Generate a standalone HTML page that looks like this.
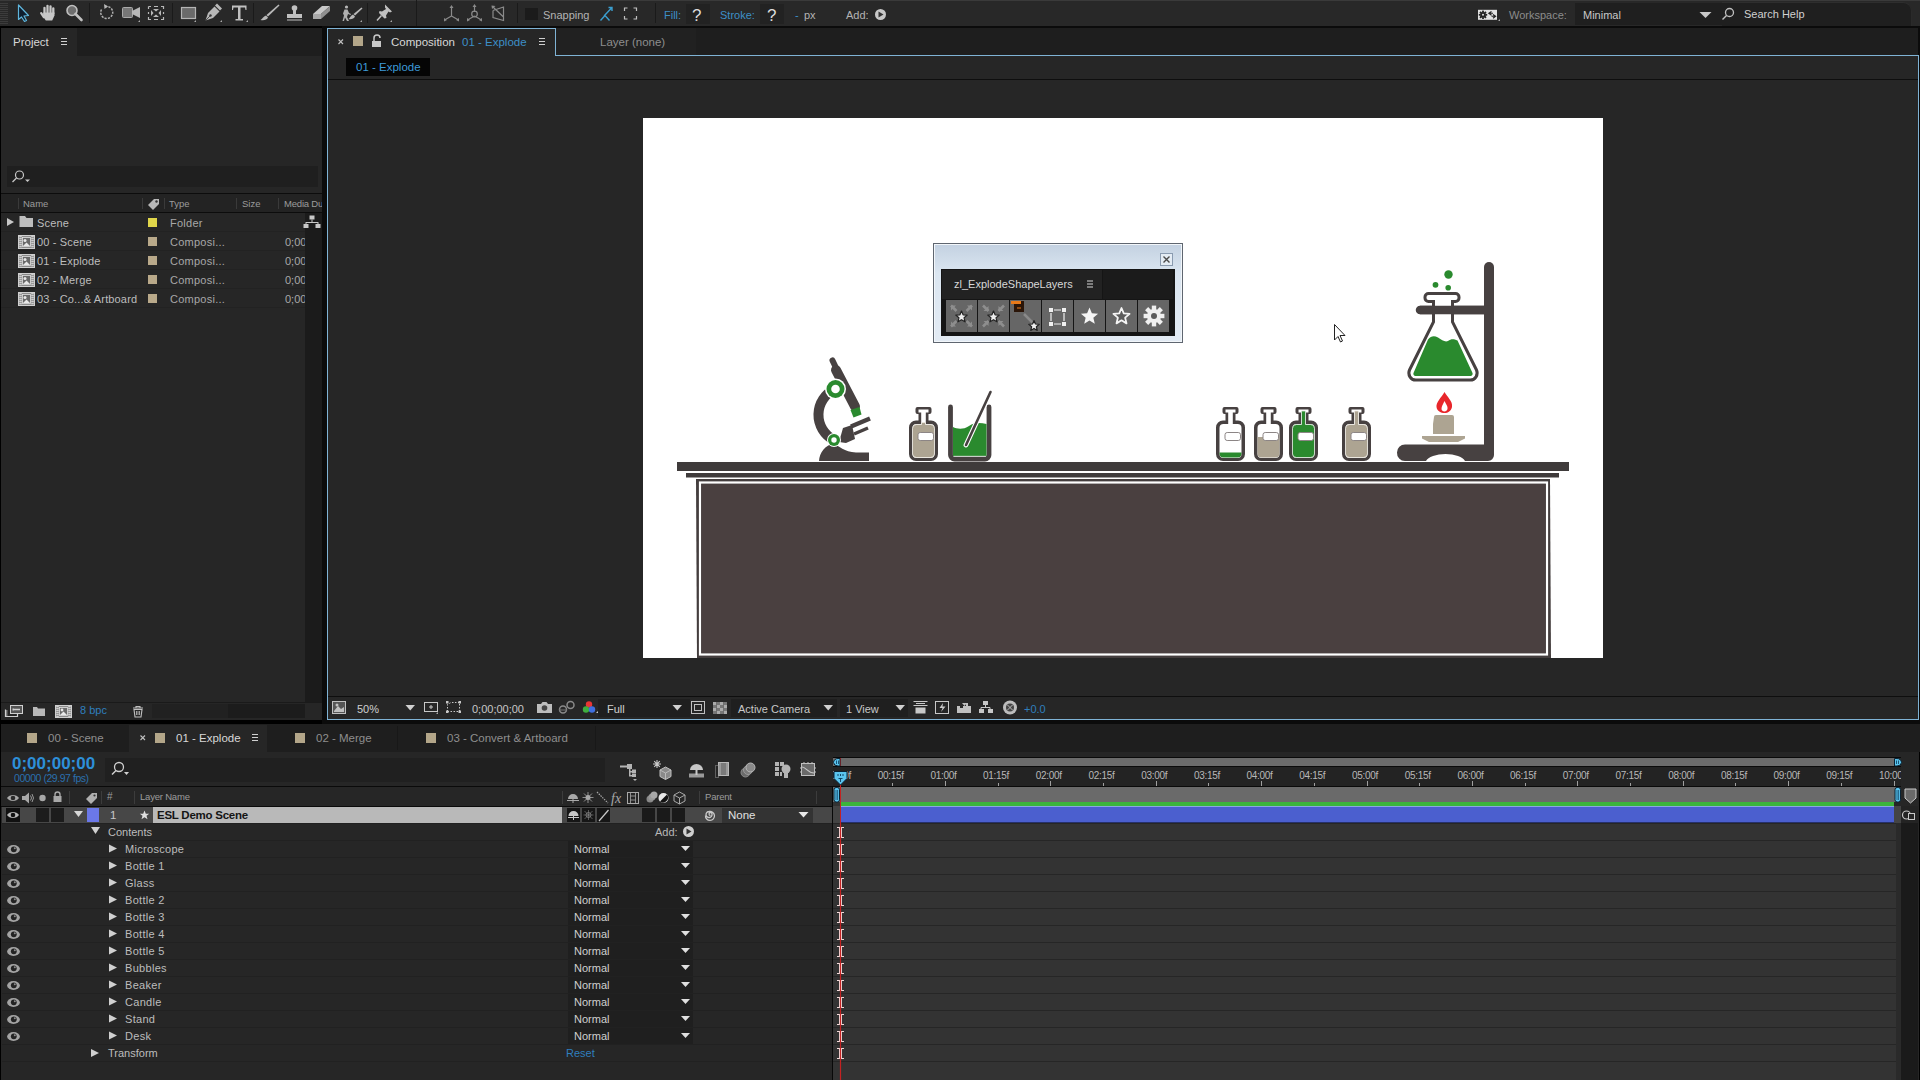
<!DOCTYPE html>
<html><head><meta charset="utf-8">
<style>
*{margin:0;padding:0;box-sizing:border-box}
html,body{width:1920px;height:1080px;overflow:hidden;background:#000;font-family:"Liberation Sans",sans-serif;font-size:11px;color:#b4b4b4}
.a{position:absolute}
.t{position:absolute;white-space:nowrap;line-height:1}
svg{position:absolute;overflow:visible}
</style></head><body>
<!-- TOOLBAR -->
<div class="a" style="left:0;top:0;width:1920px;height:26px;background:#282828;border-top:1px solid #3a3a3a"></div>
<div class="a" style="left:1575px;top:3px;width:147px;height:22px;background:#1f1f1f"></div><div class="a" style="left:1722px;top:2px;width:190px;height:24px;background:#1f1f1f;border-top-right-radius:9px;border-top:1px solid #2e2e2e;border-right:1px solid #2a2a2a"></div>
<div class="a" style="left:686px;top:4px;width:24px;height:20px;background:#222"></div>
<div class="a" style="left:760px;top:4px;width:24px;height:20px;background:#222"></div>
<svg class="a" style="left:0;top:0" width="1920" height="26" viewBox="0 0 1920 26">
<g stroke="#3c3c3c" stroke-width="1">
<path d="M0 3.5H8M0 5.5H8M0 7.5H8M0 9.5H8M0 11.5H8M0 13.5H8M0 15.5H8M0 17.5H8M0 19.5H8M0 21.5H8M0 23.5H8"/>
</g>
<!-- selection arrow -->
<path d="M18.5 5L18.5 19.5L21.5 17L24.5 21.5L26.5 20.5L24 16L28.5 15.5Z" fill="#0f1e2e" stroke="#5fb6dd" stroke-width="1.2" stroke-linejoin="round"/>
<!-- hand -->
<g stroke="#c8c8c8" stroke-width="2.3" stroke-linecap="round" fill="none">
<path d="M44.5 13.5V7.8M47.5 12.5V5.8M50.5 12.5V6.3M53.3 13.5V8.3M43.8 17L41.2 13.2"/>
</g>
<path d="M43.3 12.5H54.5V15.5L52.2 20.5H45.8L43 16.5Z" fill="#c8c8c8"/>
<!-- zoom -->
<circle cx="72" cy="10.5" r="5" fill="#6e6e6e" stroke="#c0c0c0" stroke-width="1.6"/>
<path d="M75.5 14L81.5 20" stroke="#c0c0c0" stroke-width="2.6" stroke-linecap="round"/>
<path d="M89.5 3V23M172.5 3V23M253.5 3V23M367.5 3V23M416.5 0V26M517.5 3V23M655.5 3V23" stroke="#1a1a1a" stroke-width="1"/>
<!-- rotate -->
<path d="M101.5 9.5A6 6 0 1 0 106 6.5" fill="none" stroke="#b0b0b0" stroke-width="1.5" stroke-dasharray="2.2 1.2"/>
<path d="M104 4L108 6.5L104.5 9Z" fill="#b8b8b8"/>
<!-- camera -->
<rect x="122.5" y="7.5" width="10" height="10" rx="1" fill="#777" stroke="#aaa"/>
<path d="M132 11L140 7V18L132 14Z" fill="#b8b8b8"/>
<path d="M138 22L140 20V22Z" fill="#aaa"/>
<!-- pan behind -->
<path d="M148.5 6.5H151M154 6.5H158M161 6.5H163.5V9M163.5 12V14M163.5 17V19.5H161M158 19.5H154M151 19.5H148.5V17M148.5 14V12M148.5 9V6.5" fill="none" stroke="#b8b8b8" stroke-width="1.2"/>
<path d="M153 9H159L156 11.5Z M153 17H159L156 14.5Z M151 10V16L153.5 13Z M161 10V16L158.5 13Z" fill="#b8b8b8"/>
<!-- rectangle -->
<rect x="181.5" y="7.5" width="14" height="11" fill="#6a6a6a" stroke="#b4b4b4" stroke-width="1.2"/>
<path d="M194 22L196 20V22Z" fill="#aaa"/>
<!-- pen -->
<path d="M205.5 20.5L208 13L214.5 6.5L219.5 11.5L213 18Z" fill="#b8b8b8"/>
<path d="M215 5.5L217 3.5L222 8.5L220 10.5Z" fill="#b8b8b8"/>
<circle cx="210.5" cy="15.5" r="1.2" fill="#333"/>
<path d="M205.5 20.5L210 16" stroke="#333" stroke-width="0.8"/>
<path d="M220 22L222 20V22Z" fill="#aaa"/>
<!-- type -->
<path d="M232 5.5H246.5V10H245.5L245 7.5H240.5V19H243V20.5H235.5V19H238V7.5H233.5L233 10H232Z" fill="#c0c0c0"/>
<path d="M246 22L248 20V22Z" fill="#aaa"/>
<!-- brush -->
<path d="M278.5 4.5L279.5 5.5L268 16.5L266.5 15Z" fill="#b8b8b8"/>
<path d="M266 15.5L268 17.5C267 20 264 20.5 260.5 20C262.5 19 263 16.5 266 15.5Z" fill="#b8b8b8"/>
<!-- stamp -->
<circle cx="294.5" cy="8" r="2.8" fill="#c0c0c0"/>
<path d="M293 10H296V14H302V18H287V14H293Z" fill="#c0c0c0"/>
<path d="M287 20H302" stroke="#c0c0c0" stroke-width="1"/>
<!-- eraser -->
<path d="M313 14L322 6H330L321 14Z" fill="#c8c8c8"/>
<path d="M313 14H321V19H313Z" fill="#a8a8a8"/>
<path d="M321 14L330 6V11L321 19Z" fill="#909090"/>
<!-- roto brush -->
<circle cx="346.5" cy="7" r="1.6" fill="#b8b8b8"/>
<path d="M344.5 9.5L347.5 9.5L349 13L351 14L350.5 15L348 14L347 17L349 21H347L345 17.5L344 21H342.5L344 15.5L343 13.5Z" fill="#b0b0b0"/>
<path d="M361.5 7.5L362.5 8.5L355 15.5L353.5 14Z" fill="#b8b8b8"/>
<path d="M353 14.5L355 16.5C354 19 351 19.5 348.5 19C350 18 350.5 15.5 353 14.5Z" fill="#b8b8b8"/>
<path d="M360 22L362 20V22Z" fill="#aaa"/>
<!-- pin -->
<path d="M385 4.5L392 11.5L390 12.5L388.5 11.5L386 15.5L386.5 18L384.5 18.5L379 13L379.5 11L382 11.5L386 9L385 7.5Z" fill="#c0c0c0"/>
<path d="M381.5 15.5L377 20.5" stroke="#c0c0c0" stroke-width="1.5"/>
<path d="M390 22L392 20V22Z" fill="#aaa"/>
<!-- axis icons -->
<g fill="none" stroke="#8a8a8a" stroke-width="1.2">
<path d="M451.5 16V7M451.5 16L444.5 20M451.5 16L458.5 20"/>
<path d="M474.5 12V6M474.5 16L467.5 20M474.5 16L481.5 20"/>
<circle cx="474.5" cy="14" r="2.8"/>
<path d="M492.5 6.5L503.5 17M493 10.5V17.5L503.5 20.5V7L493 10.5"/>
</g>
<g fill="#8a8a8a">
<path d="M449.5 8H453.5L451.5 5Z M444 18L444 21.5L447 20Z M459 18L459 21.5L456 20Z"/>
<path d="M472.5 7H476.5L474.5 4Z M467 18L467 21.5L470 20Z M482 18L482 21.5L479 20Z"/>
<path d="M491.5 5.5L495.5 6L492 9Z"/>
</g>
<!-- snapping -->
<rect x="525" y="8" width="13" height="12" fill="#1b1b1b"/>
<path d="M600.5 20.5L605 15.5L609.5 20.5M604 16L612 7.5M608.5 7.5H612V11" fill="none" stroke="#3b9fd0" stroke-width="1.4"/>
<path d="M624.5 11V8H627.5M633.5 8H636.5V11M636.5 16V19H633.5M627.5 19H624.5V16" fill="none" stroke="#c0c0c0" stroke-width="1.2"/>
<circle cx="880.5" cy="14.5" r="5.5" fill="#c8c8c8"/>
<path d="M878.5 11.5L883.5 14.5L878.5 17.5Z" fill="#333"/>
<!-- workspace icon -->
<rect x="1478" y="9.8" width="19" height="10" fill="#e2e2e2"/>
<circle cx="1483" cy="14.8" r="2.9" fill="#222"/><rect x="1485.40" y="13.90" width="1.8" height="1.8" fill="#222" transform="rotate(0 1486.30 14.80)"/><rect x="1484.43" y="16.23" width="1.8" height="1.8" fill="#222" transform="rotate(45 1485.33 17.13)"/><rect x="1482.10" y="17.20" width="1.8" height="1.8" fill="#222" transform="rotate(90 1483.00 18.10)"/><rect x="1479.77" y="16.23" width="1.8" height="1.8" fill="#222" transform="rotate(135 1480.67 17.13)"/><rect x="1478.80" y="13.90" width="1.8" height="1.8" fill="#222" transform="rotate(180 1479.70 14.80)"/><rect x="1479.77" y="11.57" width="1.8" height="1.8" fill="#222" transform="rotate(225 1480.67 12.47)"/><rect x="1482.10" y="10.60" width="1.8" height="1.8" fill="#222" transform="rotate(270 1483.00 11.50)"/><rect x="1484.43" y="11.57" width="1.8" height="1.8" fill="#222" transform="rotate(315 1485.33 12.47)"/><circle cx="1483" cy="14.8" r="1" fill="#e2e2e2"/>
<path d="M1491.5 11.5L1488.8 13.3L1491.5 15.2M1489 13.3H1493M1493 14.5L1495.6 16.3L1493 18.2M1495.5 16.3H1491.5" fill="none" stroke="#222" stroke-width="1.1"/>
<path d="M1498 21L1500 19V21Z" fill="#aaa"/>
<path d="M1699.5 12H1711.5L1705.5 18Z" fill="#c8c8c8"/>
<circle cx="1729.5" cy="12.5" r="4" fill="none" stroke="#c0c0c0" stroke-width="1.3"/>
<path d="M1726.5 15.5L1722.5 19.5" stroke="#c0c0c0" stroke-width="1.4"/>
</svg>
<div class="t" style="left:543px;top:10px;color:#b4b4b4">Snapping</div>
<div class="t" style="left:664px;top:10px;color:#3d8fc7">Fill:</div>
<div class="t" style="left:692px;top:7px;color:#dcdcdc;font-size:17px">?</div>
<div class="t" style="left:720px;top:10px;color:#3d8fc7">Stroke:</div>
<div class="t" style="left:767px;top:7px;color:#dcdcdc;font-size:17px">?</div>
<div class="t" style="left:795px;top:10px;color:#3d8fc7">-</div>
<div class="t" style="left:804px;top:10px;color:#b4b4b4">px</div>
<div class="t" style="left:846px;top:10px;color:#b4b4b4">Add:</div>
<div class="t" style="left:1509px;top:10px;color:#8c8c8c">Workspace:</div>
<div class="t" style="left:1583px;top:10px;color:#c8c8c8">Minimal</div>
<div class="t" style="left:1744px;top:9px;color:#d0d0d0">Search Help</div>

<!-- PROJECT PANEL -->
<div class="a" style="left:1px;top:28px;width:321px;height:692px;background:#262626"></div>
<div class="a" style="left:77px;top:28px;width:245px;height:28px;background:#1e1e1e"></div>
<div class="t" style="left:13px;top:37px;color:#d6d6d6;font-size:11.5px">Project</div>
<svg class="a" style="left:0;top:28px" width="322" height="30"><path d="M61 10.5H67M61 13.5H67M61 16.5H67" stroke="#d0d0d0" stroke-width="1.2"/></svg>
<!-- search field -->
<div class="a" style="left:7px;top:166px;width:311px;height:21px;background:#1f1f1f"></div>
<svg class="a" style="left:0;top:159.5px" width="40" height="30"><circle cx="19.5" cy="15" r="4" fill="none" stroke="#c8c8c8" stroke-width="1.2"/><path d="M16.5 18L12.5 22" stroke="#c8c8c8" stroke-width="1.3"/><path d="M25 19.5H30L27.5 22Z" fill="#c8c8c8"/></svg>
<!-- header -->
<div class="a" style="left:1px;top:193px;width:321px;height:1px;background:#0c0c0c"></div>
<div class="a" style="left:1px;top:194px;width:321px;height:18px;background:#232323"></div>
<div class="a" style="left:1px;top:212px;width:321px;height:1px;background:#0c0c0c"></div>
<div class="a" style="left:18px;top:198px;width:1px;height:11px;background:#3a3a3a"></div>
<div class="a" style="left:142px;top:198px;width:1px;height:11px;background:#3a3a3a"></div>
<div class="a" style="left:164px;top:198px;width:1px;height:11px;background:#3a3a3a"></div>
<div class="a" style="left:236px;top:198px;width:1px;height:11px;background:#3a3a3a"></div>
<div class="a" style="left:278px;top:198px;width:1px;height:11px;background:#3a3a3a"></div>
<div class="t" style="left:23px;top:199px;color:#9c9c9c;font-size:9.5px">Name</div>
<div class="t" style="left:169px;top:199px;color:#9c9c9c;font-size:9.5px">Type</div>
<div class="t" style="left:242px;top:199px;color:#9c9c9c;font-size:9.5px">Size</div>
<div class="t" style="left:284px;top:199px;color:#9c9c9c;font-size:9.5px;width:38px;overflow:hidden;letter-spacing:-0.2px">Media Duration</div>
<svg class="a" style="left:146px;top:196px" width="16" height="16"><path d="M2 9L8 3H13V8L7 14Z" fill="#b8b8b8"/><circle cx="10.5" cy="5.5" r="1.2" fill="#333"/></svg>
<!-- rows -->
<div class="a" style="left:305px;top:213px;width:17px;height:489px;background:#1b1b1b"></div>
<div class="a" style="left:1px;top:231px;width:304px;height:1px;background:#222"></div>
<div class="a" style="left:1px;top:250px;width:304px;height:1px;background:#222"></div>
<div class="a" style="left:1px;top:269px;width:304px;height:1px;background:#222"></div>
<div class="a" style="left:1px;top:288px;width:304px;height:1px;background:#222"></div>
<div class="a" style="left:1px;top:307px;width:304px;height:1px;background:#222"></div>
<svg class="a" style="left:0;top:213px" width="322" height="100">
<path d="M7 5V13L14 9Z" fill="#c8c8c8"/>
<path d="M19.5 3H25L26.5 5H33V14H19.5Z" fill="#bdbdbd"/>
<rect x="18.5" y="22.5" width="16" height="13" fill="#8a8a8a" stroke="#d0d0d0" stroke-width="1"/>
<path d="M20.5 23V35M32.5 23V35" stroke="#d0d0d0" stroke-width="2.5" stroke-dasharray="1.2 0.8"/>
<rect x="22.5" y="24.5" width="8" height="9" fill="#6a6a6a" stroke="#e0e0e0" stroke-width="0.8"/>
<circle cx="25" cy="27.5" r="1.5" fill="#e8e8e8"/><path d="M23 33L26.5 29.5L30 33Z" fill="#e8e8e8"/><rect x="18.5" y="41.5" width="16" height="13" fill="#8a8a8a" stroke="#d0d0d0" stroke-width="1"/>
<path d="M20.5 42V54M32.5 42V54" stroke="#d0d0d0" stroke-width="2.5" stroke-dasharray="1.2 0.8"/>
<rect x="22.5" y="43.5" width="8" height="9" fill="#6a6a6a" stroke="#e0e0e0" stroke-width="0.8"/>
<circle cx="25" cy="46.5" r="1.5" fill="#e8e8e8"/><path d="M23 52L26.5 48.5L30 52Z" fill="#e8e8e8"/><rect x="18.5" y="60.5" width="16" height="13" fill="#8a8a8a" stroke="#d0d0d0" stroke-width="1"/>
<path d="M20.5 61V73M32.5 61V73" stroke="#d0d0d0" stroke-width="2.5" stroke-dasharray="1.2 0.8"/>
<rect x="22.5" y="62.5" width="8" height="9" fill="#6a6a6a" stroke="#e0e0e0" stroke-width="0.8"/>
<circle cx="25" cy="65.5" r="1.5" fill="#e8e8e8"/><path d="M23 71L26.5 67.5L30 71Z" fill="#e8e8e8"/><rect x="18.5" y="79.5" width="16" height="13" fill="#8a8a8a" stroke="#d0d0d0" stroke-width="1"/>
<path d="M20.5 80V92M32.5 80V92" stroke="#d0d0d0" stroke-width="2.5" stroke-dasharray="1.2 0.8"/>
<rect x="22.5" y="81.5" width="8" height="9" fill="#6a6a6a" stroke="#e0e0e0" stroke-width="0.8"/>
<circle cx="25" cy="84.5" r="1.5" fill="#e8e8e8"/><path d="M23 90L26.5 86.5L30 90Z" fill="#e8e8e8"/>
<rect x="309.5" y="2.5" width="5" height="4" fill="#c8c8c8"/><path d="M312 6.5V9M306 9.5H318M306 9V11M318 9V11" stroke="#c8c8c8" fill="none"/><rect x="303.5" y="11" width="5" height="4" fill="#c8c8c8"/><rect x="315.5" y="11" width="5" height="4" fill="#c8c8c8"/>
<rect x="148" y="5" width="9" height="9" fill="#e0d64a"/>
<rect x="148" y="24" width="9" height="9" fill="#b9a98a"/>
<rect x="148" y="43" width="9" height="9" fill="#b9a98a"/>
<rect x="148" y="62" width="9" height="9" fill="#b9a98a"/>
<rect x="148" y="81" width="9" height="9" fill="#b9a98a"/>
</svg>
<div class="t" style="left:37px;top:218px;color:#bdbdbd;letter-spacing:0.15px">Scene</div>
<div class="t" style="left:37px;top:237px;color:#bdbdbd;letter-spacing:0.15px">00 - Scene</div>
<div class="t" style="left:37px;top:256px;color:#bdbdbd;letter-spacing:0.15px">01 - Explode</div>
<div class="t" style="left:37px;top:275px;color:#bdbdbd;letter-spacing:0.15px">02 - Merge</div>
<div class="t" style="left:37px;top:294px;color:#bdbdbd;letter-spacing:0.15px">03 - Co...&amp; Artboard</div>
<div class="t" style="left:170px;top:218px;color:#a8a8a8;letter-spacing:0.25px">Folder</div>
<div class="t" style="left:170px;top:237px;color:#a8a8a8;letter-spacing:0.25px">Composi...</div>
<div class="t" style="left:170px;top:256px;color:#a8a8a8;letter-spacing:0.25px">Composi...</div>
<div class="t" style="left:170px;top:275px;color:#a8a8a8;letter-spacing:0.25px">Composi...</div>
<div class="t" style="left:170px;top:294px;color:#a8a8a8;letter-spacing:0.25px">Composi...</div>
<div class="t" style="left:285px;top:237px;color:#a8a8a8;width:20px;overflow:hidden">0;00;10;00</div>
<div class="t" style="left:285px;top:256px;color:#a8a8a8;width:20px;overflow:hidden">0;00;10;00</div>
<div class="t" style="left:285px;top:275px;color:#a8a8a8;width:20px;overflow:hidden">0;00;10;00</div>
<div class="t" style="left:285px;top:294px;color:#a8a8a8;width:20px;overflow:hidden">0;00;10;00</div>
<!-- bottom bar -->
<div class="a" style="left:1px;top:702px;width:321px;height:1px;background:#1a1a1a"></div>
<div class="a" style="left:152px;top:704px;width:76px;height:14px;background:#212121"></div>
<div class="a" style="left:228px;top:704px;width:77px;height:14px;background:#1c1c1c"></div>
<svg class="a" style="left:0;top:702px" width="150" height="18">
<rect x="10.5" y="3.5" width="12" height="8" fill="#555" stroke="#d0d0d0"/><path d="M14 7.5H20" stroke="#d0d0d0" stroke-width="1.5"/><rect x="12.5" y="6.5" width="1.5" height="2" fill="#d0d0d0"/>
<path d="M5.5 7.5V14.5H17.5V11.5" fill="none" stroke="#d0d0d0" stroke-width="1.2"/><path d="M5.5 9H7.5M5.5 11H7.5M5.5 13H7.5" stroke="#d0d0d0"/>
<path d="M33 5H37L38 6.5H45V14H33Z" fill="#b8b8b8"/>
<rect x="55.5" y="3.5" width="16" height="12" fill="#8a8a8a" stroke="#d0d0d0"/><path d="M57.5 4V15M69.5 4V15" stroke="#d0d0d0" stroke-width="2.5" stroke-dasharray="1.2 0.8"/><rect x="59.5" y="5.5" width="8" height="8" fill="#6a6a6a" stroke="#e0e0e0" stroke-width="0.8"/><circle cx="62" cy="8" r="1.4" fill="#e8e8e8"/><path d="M60 13L63.5 9.5L67 13Z" fill="#e8e8e8"/>
<path d="M133 6H143M136 6V4.5H140V6M134 7.5H142L141 15H135Z" fill="none" stroke="#c0c0c0" stroke-width="1.1"/>
<path d="M136.5 9V13M138 9V13M139.5 9V13" stroke="#c0c0c0" stroke-width="0.8"/>
</svg>
<div class="t" style="left:80px;top:705px;color:#2f7fbe">8 bpc</div>
<!-- COMP PANEL -->
<div class="a" style="left:322px;top:26px;width:1598px;height:698px;background:#0b0b0b"></div>
<div class="a" style="left:328px;top:28px;width:1590px;height:27px;background:#1e1e1e"></div>
<div class="a" style="left:328px;top:29px;width:227px;height:27px;background:#262626"></div>
<div class="a" style="left:556px;top:28px;width:140px;height:27px;background:#212121"></div>
<div class="a" style="left:328px;top:56px;width:1590px;height:23px;background:#262626"></div>
<div class="a" style="left:328px;top:79px;width:1590px;height:1px;background:#0e0e0e"></div>
<div class="a" style="left:328px;top:80px;width:1590px;height:616px;background:#262626"></div>
<div class="a" style="left:328px;top:696px;width:1590px;height:1px;background:#0e0e0e"></div>
<div class="a" style="left:328px;top:697px;width:1590px;height:22px;background:#262626"></div>
<!-- blue border -->
<div class="a" style="left:327px;top:28px;width:229px;height:1px;background:#7fb3d5"></div>
<div class="a" style="left:555px;top:28px;width:1px;height:28px;background:#7fb3d5"></div>
<div class="a" style="left:555px;top:55px;width:1364px;height:1px;background:#7fb3d5"></div>
<div class="a" style="left:1918px;top:55px;width:1px;height:665px;background:#7fb3d5"></div>
<div class="a" style="left:327px;top:28px;width:1px;height:692px;background:#7fb3d5"></div>
<div class="a" style="left:327px;top:719px;width:1592px;height:1px;background:#7fb3d5"></div>
<!-- tab content -->
<svg class="a" style="left:328px;top:29px" width="230" height="27">
<path d="M10.5 10.5L15 15M15 10.5L10.5 15" stroke="#c0c0c0" stroke-width="1.1"/>
<rect x="25" y="7" width="10" height="10" fill="#b3a689"/>
<path d="M46 12V9A3 3 0 0 1 52 9" fill="none" stroke="#c8c8c8" stroke-width="1.5"/>
<rect x="44" y="12" width="9" height="6" fill="#c8c8c8"/>
<path d="M211 9.5H217M211 12.5H217M211 15.5H217" stroke="#d0d0d0" stroke-width="1.2"/>
</svg>
<div class="t" style="left:391px;top:37px;color:#d8d8d8;font-size:11.5px">Composition</div>
<div class="t" style="left:462px;top:37px;color:#3d8fc7;font-size:11.5px">01 - Explode</div>
<div class="t" style="left:600px;top:37px;color:#8e8e8e;font-size:11.5px">Layer (none)</div>
<div class="a" style="left:346px;top:58px;width:84px;height:18px;background:#050505"></div>
<div class="t" style="left:356px;top:62px;color:#3d9ad8;font-size:11.5px">01 - Explode</div>
<!-- bottom toolbar -->
<div class="a" style="left:598px;top:699px;width:92px;height:18px;background:#1f1f1f"></div>
<div class="a" style="left:731px;top:699px;width:106px;height:18px;background:#1f1f1f"></div>
<div class="a" style="left:840px;top:699px;width:68px;height:18px;background:#1f1f1f"></div>
<svg class="a" style="left:0;top:697px" width="1100" height="22">
<rect x="332.5" y="4.5" width="13" height="12" fill="#555" stroke="#c0c0c0"/>
<path d="M334 14L338 9L341 12L344 10V15H334Z" fill="#c0c0c0"/><circle cx="337" cy="8" r="1.5" fill="#c0c0c0"/>
<path d="M405.5 8H415L410.25 13.5Z" fill="#d0d0d0"/>
<rect x="424.5" y="5.5" width="13" height="9" fill="none" stroke="#c8c8c8"/><path d="M431 8V12M429 10H433" stroke="#c8c8c8"/><path d="M436 17L438 15V17Z" fill="#aaa"/>
<path d="M447.5 14.5V7.5L451 5.5H459.5V14.5H447.5" fill="none" stroke="#c8c8c8" stroke-dasharray="1.5 1.5"/>
<rect x="446" y="4" width="2.5" height="2.5" fill="#c8c8c8"/><rect x="458.5" y="4" width="2.5" height="2.5" fill="#c8c8c8"/><rect x="446" y="13.5" width="2.5" height="2.5" fill="#c8c8c8"/><rect x="458.5" y="13.5" width="2.5" height="2.5" fill="#c8c8c8"/>
<path d="M537 7H541L542.5 5H546.5L548 7H552V16H537Z" fill="#bdbdbd"/><circle cx="544.5" cy="11" r="2.8" fill="#444"/>
<circle cx="563" cy="12.5" r="3.5" fill="none" stroke="#8a8a8a" stroke-width="1.5"/><circle cx="570.5" cy="8" r="3.5" fill="none" stroke="#8a8a8a" stroke-width="1.5"/><path d="M559 13H567" stroke="#777"/>
<circle cx="589" cy="7.5" r="3.2" fill="#e83535"/><circle cx="586" cy="12.5" r="3.2" fill="#3fae3f"/><circle cx="592" cy="12.5" r="3.2" fill="#3f6fe0"/><path d="M596 16L598 14V16Z" fill="#ccc"/>
<path d="M672.5 8H682L677.25 13.5Z" fill="#d0d0d0"/>
<rect x="691.5" y="4.5" width="13" height="12" fill="none" stroke="#c0c0c0"/><rect x="694.5" y="7.5" width="7" height="6" fill="none" stroke="#c0c0c0"/>
<g fill="#aaa"><rect x="713" y="5" width="3.5" height="3"/><rect x="720" y="5" width="3.5" height="3"/><rect x="716.5" y="8" width="3.5" height="3"/><rect x="723.5" y="8" width="3.5" height="3"/><rect x="713" y="11" width="3.5" height="3"/><rect x="720" y="11" width="3.5" height="3"/><rect x="716.5" y="14" width="3.5" height="3"/><rect x="723.5" y="14" width="3.5" height="3"/></g>
<g fill="#777"><rect x="716.5" y="5" width="3.5" height="3"/><rect x="723.5" y="5" width="3.5" height="3"/><rect x="713" y="8" width="3.5" height="3"/><rect x="720" y="8" width="3.5" height="3"/><rect x="716.5" y="11" width="3.5" height="3"/><rect x="723.5" y="11" width="3.5" height="3"/><rect x="713" y="14" width="3.5" height="3"/><rect x="720" y="14" width="3.5" height="3"/></g>
<path d="M823.5 8H833L828.25 13.5Z" fill="#d0d0d0"/>
<path d="M895.5 8H905L900.25 13.5Z" fill="#d0d0d0"/>
<path d="M913.5 4.5H927.5M913.5 8.5H927.5M916 6.5H925" stroke="#c8c8c8"/><rect x="915.5" y="10.5" width="10" height="6" fill="#c8c8c8"/>
<rect x="935.5" y="4.5" width="13" height="12" fill="none" stroke="#c8c8c8"/><path d="M943 6L939.5 11H942.5L941 15L945.5 9.5H942.5Z" fill="#c8c8c8"/>
<path d="M957 16H971V9H968V6H966V9H963V11H960V9H957Z" fill="#c0c0c0"/><path d="M962 6H967L964.5 9Z" fill="#c0c0c0"/>
<rect x="983" y="4" width="5" height="4" fill="#c8c8c8"/><path d="M985.5 8V10.5M981 10.5H990M981 10.5V12M990 10.5V12" stroke="#c8c8c8" fill="none"/><rect x="979" y="12" width="5" height="4" fill="#c8c8c8"/><rect x="988" y="12" width="5" height="4" fill="#c8c8c8"/>
<circle cx="1010" cy="10.5" r="7" fill="#bdbdbd"/><circle cx="1010" cy="10.5" r="4" fill="#444"/><path d="M1007 7.5L1013 13.5M1013 7.5L1007 13.5" stroke="#bbb" stroke-width="1"/>
</svg>
<div class="t" style="left:357px;top:704px;color:#d0d0d0">50%</div>
<div class="t" style="left:472px;top:704px;color:#c8c8c8">0;00;00;00</div>
<div class="t" style="left:607px;top:704px;color:#d0d0d0">Full</div>
<div class="t" style="left:738px;top:704px;color:#c8c8c8">Active Camera</div>
<div class="t" style="left:846px;top:704px;color:#c8c8c8">1 View</div>
<div class="t" style="left:1024px;top:704px;color:#2f7fbe">+0.0</div>
<!-- COMP ARTWORK -->
<!--ART-START--><div class="a" style="left:643px;top:118px;width:960px;height:540px;background:#fff"></div>
<svg class="a" style="left:643px;top:118px" width="960" height="540" viewBox="643 118 960 540">
<rect x="677" y="462" width="892" height="9" fill="#3f3b3b"/>
<rect x="686" y="473" width="873" height="4.5" fill="#3f3b3b"/>
<path d="M696 479H1550L1551 658H697Z" fill="#443e3e"/>
<rect x="700" y="482.5" width="847" height="172" fill="none" stroke="#fff" stroke-width="2.2"/>
<rect x="701.5" y="484" width="844" height="169" fill="#4a4040"/>
<path d="M832.5 360.5L838 372" stroke="#474141" stroke-width="6" stroke-linecap="round"/>
<path d="M836 370L855 406.5" stroke="#474141" stroke-width="10" stroke-linecap="round"/>
<path d="M850.5 410L859.5 407L861.5 414.5L853.5 417.5Z" fill="#2a8a2e"/>
<path d="M835 389A28.3 28.3 0 0 0 834 440" fill="none" stroke="#474141" stroke-width="10"/>
<path d="M851 426.5L870 418.5" stroke="#474141" stroke-width="4.5"/>
<path d="M854 434L868 428" stroke="#474141" stroke-width="3.5"/>
<path d="M843 428L852 425L855 439L846 443L839 442Z" fill="#474141"/>
<path d="M819 461C819.5 453 825 445 834 443.5C839 446 844 452 856 452.5H869V461Z" fill="#474141"/>
<circle cx="835.5" cy="389" r="10.5" fill="#fff"/>
<circle cx="835.5" cy="389" r="9" fill="#2a8a2e"/>
<circle cx="835.5" cy="389" r="4.3" fill="#fff"/>
<circle cx="834" cy="440" r="7" fill="#fff"/>
<circle cx="834" cy="440" r="6" fill="#2a8a2e"/>
<circle cx="834" cy="440" r="2.7" fill="#fff"/>
<path d="M917.5 407A2 2 0 0 0 915.5 409V412A2 2 0 0 0 917.5 414H918.5V420.5H916.0A7 7 0 0 0 909.0 427.5V454A7 7 0 0 0 916.0 461H931.0A7 7 0 0 0 938.0 454V427.5A7 7 0 0 0 931.0 420.5H928.5V414H929.5A2 2 0 0 0 931.5 412V409A2 2 0 0 0 929.5 407Z" fill="#474141"/><path d="M918.5 409.5H928.5V412.5H925.8V424H930.5A4 4 0 0 1 934.5 428V454A4 4 0 0 1 930.5 458H916.5A4 4 0 0 1 912.5 454V428A4 4 0 0 1 916.5 424H921.2V412.5H918.5Z" fill="#fff"/><path d="M921.5 422.5V424.5H916.5A4 4 0 0 0 912.5 428.5V454A4 4 0 0 0 916.5 457.5H930.5A4 4 0 0 0 934.5 454V428.5A4 4 0 0 0 930.5 424.5H925.5V422.5Z" fill="#ada492" stroke="#efece6" stroke-width="0.8"/><rect x="918.0" y="432.5" width="15.5" height="8" rx="2.2" fill="#fff" stroke="#8c8585" stroke-width="1"/>
<path d="M950.5 407V455A4 4 0 0 0 954.5 459H985A4 4 0 0 0 989 455V407" fill="none" stroke="#474141" stroke-width="4.8" stroke-linecap="round"/>
<path d="M953 427C957 429 963 430 969 426C975 422 981 423 986.5 424V456H953Z" fill="#2a8a2e"/>
<path d="M953.5 456.3H986" stroke="#dfeadf" stroke-width="0.8"/>
<path d="M990.5 392L966 445" stroke="#fff" stroke-width="4.8" stroke-linecap="round"/>
<path d="M990.5 392L966 445" stroke="#474141" stroke-width="2.6" stroke-linecap="round"/>
<path d="M1224.5 407A2 2 0 0 0 1222.5 409V412A2 2 0 0 0 1224.5 414H1225.5V420.5H1223.0A7 7 0 0 0 1216.0 427.5V454A7 7 0 0 0 1223.0 461H1238.0A7 7 0 0 0 1245.0 454V427.5A7 7 0 0 0 1238.0 420.5H1235.5V414H1236.5A2 2 0 0 0 1238.5 412V409A2 2 0 0 0 1236.5 407Z" fill="#474141"/><path d="M1225.5 409.5H1235.5V412.5H1232.8V424H1237.5A4 4 0 0 1 1241.5 428V454A4 4 0 0 1 1237.5 458H1223.5A4 4 0 0 1 1219.5 454V428A4 4 0 0 1 1223.5 424H1228.2V412.5H1225.5Z" fill="#fff"/><path d="M1219.5 452.5H1241.5V454A4 4 0 0 1 1237.5 457.5H1223.5A4 4 0 0 1 1219.5 454Z" fill="#2a8a2e"/><rect x="1225.0" y="432.5" width="15.5" height="8" rx="2.2" fill="#fff" stroke="#8c8585" stroke-width="1"/>
<path d="M1262.5 407A2 2 0 0 0 1260.5 409V412A2 2 0 0 0 1262.5 414H1263.5V420.5H1261.0A7 7 0 0 0 1254.0 427.5V454A7 7 0 0 0 1261.0 461H1276.0A7 7 0 0 0 1283.0 454V427.5A7 7 0 0 0 1276.0 420.5H1273.5V414H1274.5A2 2 0 0 0 1276.5 412V409A2 2 0 0 0 1274.5 407Z" fill="#474141"/><path d="M1263.5 409.5H1273.5V412.5H1270.8V424H1275.5A4 4 0 0 1 1279.5 428V454A4 4 0 0 1 1275.5 458H1261.5A4 4 0 0 1 1257.5 454V428A4 4 0 0 1 1261.5 424H1266.2V412.5H1263.5Z" fill="#fff"/><path d="M1257.5 437H1274.5L1278.5 434.5H1279.5V454A4 4 0 0 1 1275.5 457.5H1261.5A4 4 0 0 1 1257.5 454Z" fill="#ada492"/><rect x="1263.0" y="432.5" width="15.5" height="8" rx="2.2" fill="#fff" stroke="#8c8585" stroke-width="1"/>
<path d="M1297.5 407A2 2 0 0 0 1295.5 409V412A2 2 0 0 0 1297.5 414H1298.5V420.5H1296.0A7 7 0 0 0 1289.0 427.5V454A7 7 0 0 0 1296.0 461H1311.0A7 7 0 0 0 1318.0 454V427.5A7 7 0 0 0 1311.0 420.5H1308.5V414H1309.5A2 2 0 0 0 1311.5 412V409A2 2 0 0 0 1309.5 407Z" fill="#474141"/><path d="M1298.5 409.5H1308.5V412.5H1305.8V424H1310.5A4 4 0 0 1 1314.5 428V454A4 4 0 0 1 1310.5 458H1296.5A4 4 0 0 1 1292.5 454V428A4 4 0 0 1 1296.5 424H1301.2V412.5H1298.5Z" fill="#fff"/><path d="M1301.5 411V424.5H1296.5A4 4 0 0 0 1292.5 428.5V454A4 4 0 0 0 1296.5 457.5H1310.5A4 4 0 0 0 1314.5 454V428.5A4 4 0 0 0 1310.5 424.5H1305.5V411Z" fill="#2a8a2e" stroke="#dfeadf" stroke-width="0.8"/><rect x="1298.0" y="432.5" width="15.5" height="8" rx="2.2" fill="#fff" stroke="#8c8585" stroke-width="1"/>
<path d="M1350.5 407A2 2 0 0 0 1348.5 409V412A2 2 0 0 0 1350.5 414H1351.5V420.5H1349.0A7 7 0 0 0 1342.0 427.5V454A7 7 0 0 0 1349.0 461H1364.0A7 7 0 0 0 1371.0 454V427.5A7 7 0 0 0 1364.0 420.5H1361.5V414H1362.5A2 2 0 0 0 1364.5 412V409A2 2 0 0 0 1362.5 407Z" fill="#474141"/><path d="M1351.5 409.5H1361.5V412.5H1358.8V424H1363.5A4 4 0 0 1 1367.5 428V454A4 4 0 0 1 1363.5 458H1349.5A4 4 0 0 1 1345.5 454V428A4 4 0 0 1 1349.5 424H1354.2V412.5H1351.5Z" fill="#fff"/><path d="M1354.5 411V424.5H1349.5A4 4 0 0 0 1345.5 428.5V454A4 4 0 0 0 1349.5 457.5H1363.5A4 4 0 0 0 1367.5 454V428.5A4 4 0 0 0 1363.5 424.5H1358.5V411Z" fill="#ada492" stroke="#efece6" stroke-width="0.8"/><rect x="1351.0" y="432.5" width="15.5" height="8" rx="2.2" fill="#fff" stroke="#8c8585" stroke-width="1"/>
<path d="M1489 267V450" stroke="#474141" stroke-width="10" stroke-linecap="round"/>
<path d="M1420 310H1489" stroke="#474141" stroke-width="8.5" stroke-linecap="round"/>
<path d="M1397 452.5A8 8 0 0 1 1405 444.5H1484V434L1494 436V455A6 6 0 0 1 1488 461H1465A20 9 0 0 0 1426 461H1405A8 8 0 0 1 1397 452.5Z" fill="#474141"/>
<path d="M1428.5 293.5H1455.5A3.5 3.5 0 0 1 1459 297V298A3.5 3.5 0 0 1 1455.5 301.5H1452.5V322L1476.5 370A7 7 0 0 1 1470 380H1416A7 7 0 0 1 1409.5 370L1433.5 322V301.5H1428.5A3.5 3.5 0 0 1 1425 298V297A3.5 3.5 0 0 1 1428.5 293.5Z" fill="#fff" stroke="#474141" stroke-width="3"/>
<path d="M1420 310H1489" stroke="#474141" stroke-width="8.5"/>
<path d="M1428 339.5C1431 336 1434 335.5 1438 337.5C1442 340 1445 342.5 1448 341C1451 339 1453 338.5 1457.5 340.5L1472.5 373A2.2 2.2 0 0 1 1470.5 376H1415.5A2.2 2.2 0 0 1 1413.5 373Z" fill="#2a8a2e"/>
<circle cx="1448.5" cy="274.5" r="4.2" fill="#2a8a2e"/>
<circle cx="1435.5" cy="284.8" r="2.9" fill="#2a8a2e"/>
<circle cx="1448.2" cy="287.8" r="2.8" fill="#2a8a2e"/>
<!-- candle -->
<path d="M1444.5 392C1447 397 1453 401 1452 407C1451 411 1448 413 1444.5 413C1441 413 1437 411 1436.5 407C1436 402 1441 398 1444.5 392Z" fill="#e8262b"/>
<path d="M1444.5 401C1446 404 1448 406.5 1447.5 409C1447 410.5 1446 411.5 1444.5 411.5C1443 411.5 1441.5 410.5 1441.5 409C1441.5 406.5 1443 404 1444.5 401Z" fill="#fff"/>
<path d="M1434 417A2 2 0 0 1 1436 415H1452A2 2 0 0 1 1454 417V434H1433V424Z" fill="#ada492"/>
<path d="M1422 436H1465V438.5L1458 442H1429L1422 438.5Z" fill="#ada492"/>
</svg><!--ART-END-->
<div class="a" style="left:933px;top:243px;width:250px;height:100px;background:linear-gradient(#c3d1e1,#dbe6f1 30%,#e3ebf4);border:1px solid #5f6670"></div>
<div class="a" style="left:934px;top:244px;width:248px;height:98px;border:1px solid #f2f6fa"></div>
<div class="a" style="left:941px;top:269px;width:234px;height:67px;background:#151515"></div>
<div class="a" style="left:942px;top:270px;width:160px;height:29px;background:#222"></div>
<div class="a" style="left:1103px;top:270px;width:70px;height:29px;background:#1b1b1b"></div>
<div class="t" style="left:954px;top:279px;color:#d8d8d8;font-size:11px">zl_ExplodeShapeLayers</div>
<svg class="a" style="left:0;top:0" width="1920" height="1080">
<rect x="1160.5" y="253.5" width="12" height="12" fill="#e4ecf4" stroke="#8a9bb0" stroke-width="1"/>
<path d="M1163.5 256.5L1169.5 262.5M1169.5 256.5L1163.5 262.5" stroke="#4a4a4a" stroke-width="1.4"/>
<path d="M1087 281H1093M1087 284H1093M1087 287H1093" stroke="#d8d8d8" stroke-width="1.1"/>
<rect x="946" y="300" width="31" height="32" fill="#666"/><rect x="978" y="300" width="31" height="32" fill="#666"/><rect x="1010" y="300" width="31" height="32" fill="#666"/><rect x="1042" y="300" width="31" height="32" fill="#666"/><rect x="1074" y="300" width="31" height="32" fill="#666"/><rect x="1106" y="300" width="31" height="32" fill="#666"/><rect x="1138" y="300" width="31" height="32" fill="#666"/>

<path d="M956.5 311L951.0 305.5" stroke="#8e8e8e" stroke-width="2.6"/><path d="M951.0 305.5L956.0 305.5L951.0 310.5Z" fill="#8e8e8e"/><path d="M966.5 311L972.0 305.5" stroke="#8e8e8e" stroke-width="2.6"/><path d="M972.0 305.5L967.0 305.5L972.0 310.5Z" fill="#8e8e8e"/><path d="M956.5 321L951.0 326.5" stroke="#8e8e8e" stroke-width="2.6"/><path d="M951.0 326.5L956.0 326.5L951.0 321.5Z" fill="#8e8e8e"/><path d="M966.5 321L972.0 326.5" stroke="#8e8e8e" stroke-width="2.6"/><path d="M972.0 326.5L967.0 326.5L972.0 321.5Z" fill="#8e8e8e"/><path d="M988.5 311L983.0 305.5" stroke="#8e8e8e" stroke-width="2.6"/><path d="M988.5 311L983.5 311L988.5 306Z" fill="#8e8e8e"/><path d="M998.5 311L1004.0 305.5" stroke="#8e8e8e" stroke-width="2.6"/><path d="M998.5 311L1003.5 311L998.5 306Z" fill="#8e8e8e"/><path d="M988.5 321L983.0 326.5" stroke="#8e8e8e" stroke-width="2.6"/><path d="M988.5 321L983.5 321L988.5 326Z" fill="#8e8e8e"/><path d="M998.5 321L1004.0 326.5" stroke="#8e8e8e" stroke-width="2.6"/><path d="M998.5 321L1003.5 321L998.5 326Z" fill="#8e8e8e"/><polygon points="961.50,311.00 963.09,314.82 967.21,315.15 964.07,317.83 965.03,321.85 961.50,319.70 957.97,321.85 958.93,317.83 955.79,315.15 959.91,314.82" fill="#eeeeee" stroke="#222" stroke-width="1.2" stroke-linejoin="round"/>
<polygon points="993.50,311.00 995.09,314.82 999.21,315.15 996.07,317.83 997.03,321.85 993.50,319.70 989.97,321.85 990.93,317.83 987.79,315.15 991.91,314.82" fill="#eeeeee" stroke="#222" stroke-width="1.2" stroke-linejoin="round"/>
<path d="M1024 314L1034 324" stroke="#8a8a8a" stroke-width="2.5"/>
<polygon points="1034.00,320.50 1035.45,324.00 1039.23,324.30 1036.35,326.76 1037.23,330.45 1034.00,328.48 1030.77,330.45 1031.65,326.76 1028.77,324.30 1032.55,324.00" fill="#eeeeee" stroke="#222" stroke-width="1.2" stroke-linejoin="round"/>
<rect x="1014" y="301" width="10" height="11" fill="#2a1508"/>
<rect x="1011" y="301" width="10" height="3" fill="#e87a1a"/>
<path d="M1017 308H1021" stroke="#e87a1a" stroke-width="1"/>
<g fill="#f0f0f0"><rect x="1049" y="308" width="4" height="4"/><rect x="1062" y="308" width="4" height="4"/><rect x="1049" y="322" width="4" height="4"/><rect x="1062" y="322" width="4" height="4"/></g>
<path d="M1054 310H1061M1054 324H1061M1051 313V321M1064 313V321" stroke="#f0f0f0" stroke-width="1.2"/>
<polygon points="1089.50,307.50 1091.88,313.22 1098.06,313.72 1093.35,317.75 1094.79,323.78 1089.50,320.55 1084.21,323.78 1085.65,317.75 1080.94,313.72 1087.12,313.22" fill="#f5f5f5"/>
<polygon points="1121.50,308.00 1123.75,313.41 1129.58,313.87 1125.14,317.68 1126.50,323.38 1121.50,320.32 1116.50,323.38 1117.86,317.68 1113.42,313.87 1119.25,313.41" fill="#5d5d5d" stroke="#f5f5f5" stroke-width="1.8" stroke-linejoin="round"/>
<circle cx="1154" cy="316" r="7" fill="#f0f0f0"/><rect x="1160.00" y="313.80" width="4.4" height="4.4" fill="#f0f0f0" transform="rotate(0 1162.20 316.00)"/><rect x="1157.60" y="319.60" width="4.4" height="4.4" fill="#f0f0f0" transform="rotate(45 1159.80 321.80)"/><rect x="1151.80" y="322.00" width="4.4" height="4.4" fill="#f0f0f0" transform="rotate(90 1154.00 324.20)"/><rect x="1146.00" y="319.60" width="4.4" height="4.4" fill="#f0f0f0" transform="rotate(135 1148.20 321.80)"/><rect x="1143.60" y="313.80" width="4.4" height="4.4" fill="#f0f0f0" transform="rotate(180 1145.80 316.00)"/><rect x="1146.00" y="308.00" width="4.4" height="4.4" fill="#f0f0f0" transform="rotate(225 1148.20 310.20)"/><rect x="1151.80" y="305.60" width="4.4" height="4.4" fill="#f0f0f0" transform="rotate(270 1154.00 307.80)"/><rect x="1157.60" y="308.00" width="4.4" height="4.4" fill="#f0f0f0" transform="rotate(315 1159.80 310.20)"/><circle cx="1154" cy="316" r="3" fill="#5c5c5c"/>
<!-- cursor -->
<path d="M1334.5 324.5V340L1338 336.5L1340.5 342L1342.5 341L1340 335.5H1345Z" fill="#fff" stroke="#222" stroke-width="1"/>
</svg>



<!-- TIMELINE -->
<div class="a" style="left:0;top:724px;width:1920px;height:28px;background:#1e1e1e"></div>
<div class="a" style="left:129px;top:725px;width:138px;height:27px;background:#262626"></div>
<div class="a" style="left:397px;top:726px;width:1px;height:24px;background:#181818"></div>
<div class="a" style="left:595px;top:726px;width:1px;height:24px;background:#181818"></div>
<svg class="a" style="left:0;top:724px" width="600" height="28">
<rect x="27" y="9" width="10" height="10" fill="#b3a689"/>
<path d="M140.5 11.5L145 16M145 11.5L140.5 16" stroke="#c0c0c0" stroke-width="1.1"/>
<rect x="155" y="9" width="10" height="10" fill="#b3a689"/>
<path d="M252 10.5H258M252 13.5H258M252 16.5H258" stroke="#d0d0d0" stroke-width="1.2"/>
<rect x="295" y="9" width="10" height="10" fill="#b3a689"/>
<rect x="426" y="9" width="10" height="10" fill="#b3a689"/>
</svg>
<div class="t" style="left:48px;top:733px;color:#8e8e8e;font-size:11.5px">00 - Scene</div>
<div class="t" style="left:176px;top:733px;color:#d8d8d8;font-size:11.5px">01 - Explode</div>
<div class="t" style="left:316px;top:733px;color:#8e8e8e;font-size:11.5px">02 - Merge</div>
<div class="t" style="left:447px;top:733px;color:#8e8e8e;font-size:11.5px">03 - Convert &amp; Artboard</div>
<!-- body -->
<div class="a" style="left:1px;top:752px;width:1918px;height:328px;background:#262626"></div>
<div class="t" style="left:12px;top:755px;color:#2d8fd8;font-size:17px;font-weight:bold;letter-spacing:0px">0;00;00;00</div>
<div class="t" style="left:14px;top:773px;color:#2a6fae;font-size:10.5px;letter-spacing:-0.45px">00000 (29.97 fps)</div>
<div class="a" style="left:105px;top:758px;width:500px;height:24px;background:#202020"></div>
<div class="a" style="left:1px;top:786px;width:832px;height:1px;background:#0a0a0a"></div>
<div class="a" style="left:1px;top:806px;width:832px;height:1px;background:#0a0a0a"></div>
<div class="t" style="left:140px;top:792px;color:#9c9c9c;font-size:9.5px;letter-spacing:-0.2px">Layer Name</div>
<div class="t" style="left:705px;top:792px;color:#9c9c9c;font-size:9.5px;letter-spacing:-0.2px">Parent</div>
<div class="t" style="left:107px;top:792px;color:#9c9c9c;font-size:10px">#</div>
<!-- layer row -->
<div class="a" style="left:2px;top:807px;width:830px;height:16px;background:#474747"></div>
<div class="a" style="left:153px;top:807px;width:409px;height:16px;background:#b9b9b9"></div>
<div class="a" style="left:722px;top:808px;width:91px;height:15px;background:#333"></div>
<div class="t" style="left:157px;top:810px;color:#141414;font-size:11.5px;font-weight:bold;letter-spacing:-0.25px">ESL Demo Scene</div>
<div class="t" style="left:110px;top:810px;color:#c8c8c8;font-size:11.5px">1</div>
<div class="t" style="left:728px;top:810px;color:#e0e0e0;font-size:11.5px">None</div>
<div class="t" style="left:108px;top:827px;color:#bdbdbd">Contents</div>
<div class="t" style="left:655px;top:827px;color:#b8b8b8">Add:</div>
<div class="t" style="left:108px;top:1048px;color:#bdbdbd">Transform</div>
<div class="t" style="left:566px;top:1048px;color:#2f7fbe">Reset</div>
<!-- timeline area -->
<div class="a" style="left:832px;top:786px;width:1px;height:294px;background:#080808"></div>
<div class="a" style="left:833px;top:757px;width:1068px;height:1px;background:#0a0a0a"></div>
<div class="a" style="left:833px;top:758px;width:1063px;height:8px;background:#6b6b6b"></div>
<div class="a" style="left:833px;top:766px;width:1068px;height:1px;background:#0a0a0a"></div>
<div class="a" style="left:833px;top:767px;width:1068px;height:19px;background:#232323"></div>
<div class="a" style="left:833px;top:786px;width:1068px;height:1px;background:#0a0a0a"></div>
<div class="a" style="left:833px;top:787px;width:1063px;height:15px;background:#6a6a6a"></div>
<div class="a" style="left:840px;top:802px;width:1054px;height:4px;background:#3cb43c"></div>
<div class="a" style="left:833px;top:802px;width:7px;height:4px;background:#333"></div>
<div class="a" style="left:833px;top:806px;width:1068px;height:17px;background:#444"></div>
<div class="a" style="left:840px;top:806px;width:1054px;height:1px;background:#8aa8e0"></div>
<div class="a" style="left:840px;top:807px;width:1054px;height:15px;background:#4b5fcf"></div>
<div class="a" style="left:840px;top:822px;width:1054px;height:1px;background:#26306a"></div>
<div class="a" style="left:833px;top:823px;width:1063px;height:257px;background:#333"></div>
<div class="a" style="left:1896px;top:823px;width:5px;height:257px;background:#2a2a2a"></div>
<div class="a" style="left:1901px;top:752px;width:17px;height:328px;background:#1a1a1a"></div>
<div class="a" style="left:1901px;top:752px;width:17px;height:71px;background:#262626"></div><div class="a" style="left:1896px;top:752px;width:5px;height:5px;background:#262626"></div><div class="a" style="left:1901px;top:806px;width:17px;height:17px;background:#232323"></div>
<div class="a" style="left:2px;top:823px;width:830px;height:1px;background:#212121"></div><div class="a" style="left:833px;top:823px;width:1063px;height:1px;background:#262626"></div><div class="a" style="left:2px;top:840px;width:830px;height:1px;background:#212121"></div><div class="a" style="left:833px;top:840px;width:1063px;height:1px;background:#262626"></div><div class="a" style="left:2px;top:857px;width:830px;height:1px;background:#212121"></div><div class="a" style="left:833px;top:857px;width:1063px;height:1px;background:#262626"></div><div class="a" style="left:2px;top:874px;width:830px;height:1px;background:#212121"></div><div class="a" style="left:833px;top:874px;width:1063px;height:1px;background:#262626"></div><div class="a" style="left:2px;top:891px;width:830px;height:1px;background:#212121"></div><div class="a" style="left:833px;top:891px;width:1063px;height:1px;background:#262626"></div><div class="a" style="left:2px;top:908px;width:830px;height:1px;background:#212121"></div><div class="a" style="left:833px;top:908px;width:1063px;height:1px;background:#262626"></div><div class="a" style="left:2px;top:925px;width:830px;height:1px;background:#212121"></div><div class="a" style="left:833px;top:925px;width:1063px;height:1px;background:#262626"></div><div class="a" style="left:2px;top:942px;width:830px;height:1px;background:#212121"></div><div class="a" style="left:833px;top:942px;width:1063px;height:1px;background:#262626"></div><div class="a" style="left:2px;top:959px;width:830px;height:1px;background:#212121"></div><div class="a" style="left:833px;top:959px;width:1063px;height:1px;background:#262626"></div><div class="a" style="left:2px;top:976px;width:830px;height:1px;background:#212121"></div><div class="a" style="left:833px;top:976px;width:1063px;height:1px;background:#262626"></div><div class="a" style="left:2px;top:993px;width:830px;height:1px;background:#212121"></div><div class="a" style="left:833px;top:993px;width:1063px;height:1px;background:#262626"></div><div class="a" style="left:2px;top:1010px;width:830px;height:1px;background:#212121"></div><div class="a" style="left:833px;top:1010px;width:1063px;height:1px;background:#262626"></div><div class="a" style="left:2px;top:1027px;width:830px;height:1px;background:#212121"></div><div class="a" style="left:833px;top:1027px;width:1063px;height:1px;background:#262626"></div><div class="a" style="left:2px;top:1044px;width:830px;height:1px;background:#212121"></div><div class="a" style="left:833px;top:1044px;width:1063px;height:1px;background:#262626"></div><div class="a" style="left:2px;top:1061px;width:830px;height:1px;background:#212121"></div><div class="a" style="left:833px;top:1061px;width:1063px;height:1px;background:#262626"></div><div class="t" style="left:125px;top:844px;color:#bdbdbd;letter-spacing:0.3px">Microscope</div><div class="a" style="left:568px;top:841px;width:125px;height:16px;background:#1f1f1f"></div><div class="t" style="left:574px;top:844px;color:#d0d0d0">Normal</div><div class="t" style="left:125px;top:861px;color:#bdbdbd;letter-spacing:0.3px">Bottle 1</div><div class="a" style="left:568px;top:858px;width:125px;height:16px;background:#1f1f1f"></div><div class="t" style="left:574px;top:861px;color:#d0d0d0">Normal</div><div class="t" style="left:125px;top:878px;color:#bdbdbd;letter-spacing:0.3px">Glass</div><div class="a" style="left:568px;top:875px;width:125px;height:16px;background:#1f1f1f"></div><div class="t" style="left:574px;top:878px;color:#d0d0d0">Normal</div><div class="t" style="left:125px;top:895px;color:#bdbdbd;letter-spacing:0.3px">Bottle 2</div><div class="a" style="left:568px;top:892px;width:125px;height:16px;background:#1f1f1f"></div><div class="t" style="left:574px;top:895px;color:#d0d0d0">Normal</div><div class="t" style="left:125px;top:912px;color:#bdbdbd;letter-spacing:0.3px">Bottle 3</div><div class="a" style="left:568px;top:909px;width:125px;height:16px;background:#1f1f1f"></div><div class="t" style="left:574px;top:912px;color:#d0d0d0">Normal</div><div class="t" style="left:125px;top:929px;color:#bdbdbd;letter-spacing:0.3px">Bottle 4</div><div class="a" style="left:568px;top:926px;width:125px;height:16px;background:#1f1f1f"></div><div class="t" style="left:574px;top:929px;color:#d0d0d0">Normal</div><div class="t" style="left:125px;top:946px;color:#bdbdbd;letter-spacing:0.3px">Bottle 5</div><div class="a" style="left:568px;top:943px;width:125px;height:16px;background:#1f1f1f"></div><div class="t" style="left:574px;top:946px;color:#d0d0d0">Normal</div><div class="t" style="left:125px;top:963px;color:#bdbdbd;letter-spacing:0.3px">Bubbles</div><div class="a" style="left:568px;top:960px;width:125px;height:16px;background:#1f1f1f"></div><div class="t" style="left:574px;top:963px;color:#d0d0d0">Normal</div><div class="t" style="left:125px;top:980px;color:#bdbdbd;letter-spacing:0.3px">Beaker</div><div class="a" style="left:568px;top:977px;width:125px;height:16px;background:#1f1f1f"></div><div class="t" style="left:574px;top:980px;color:#d0d0d0">Normal</div><div class="t" style="left:125px;top:997px;color:#bdbdbd;letter-spacing:0.3px">Candle</div><div class="a" style="left:568px;top:994px;width:125px;height:16px;background:#1f1f1f"></div><div class="t" style="left:574px;top:997px;color:#d0d0d0">Normal</div><div class="t" style="left:125px;top:1014px;color:#bdbdbd;letter-spacing:0.3px">Stand</div><div class="a" style="left:568px;top:1011px;width:125px;height:16px;background:#1f1f1f"></div><div class="t" style="left:574px;top:1014px;color:#d0d0d0">Normal</div><div class="t" style="left:125px;top:1031px;color:#bdbdbd;letter-spacing:0.3px">Desk</div><div class="a" style="left:568px;top:1028px;width:125px;height:16px;background:#1f1f1f"></div><div class="t" style="left:574px;top:1031px;color:#d0d0d0">Normal</div>

<div class="a" style="left:833px;top:767px;width:1068px;height:19px;overflow:hidden"><div class="t" style="left:-8.0px;top:4px;color:#b8b8b8;font-size:10px;letter-spacing:-0.3px">00:00f</div><div class="t" style="left:44.7px;top:4px;color:#b8b8b8;font-size:10px;letter-spacing:-0.3px">00:15f</div><div class="t" style="left:97.4px;top:4px;color:#b8b8b8;font-size:10px;letter-spacing:-0.3px">01:00f</div><div class="t" style="left:150.1px;top:4px;color:#b8b8b8;font-size:10px;letter-spacing:-0.3px">01:15f</div><div class="t" style="left:202.8px;top:4px;color:#b8b8b8;font-size:10px;letter-spacing:-0.3px">02:00f</div><div class="t" style="left:255.5px;top:4px;color:#b8b8b8;font-size:10px;letter-spacing:-0.3px">02:15f</div><div class="t" style="left:308.2px;top:4px;color:#b8b8b8;font-size:10px;letter-spacing:-0.3px">03:00f</div><div class="t" style="left:360.9px;top:4px;color:#b8b8b8;font-size:10px;letter-spacing:-0.3px">03:15f</div><div class="t" style="left:413.6px;top:4px;color:#b8b8b8;font-size:10px;letter-spacing:-0.3px">04:00f</div><div class="t" style="left:466.3px;top:4px;color:#b8b8b8;font-size:10px;letter-spacing:-0.3px">04:15f</div><div class="t" style="left:519.0px;top:4px;color:#b8b8b8;font-size:10px;letter-spacing:-0.3px">05:00f</div><div class="t" style="left:571.7px;top:4px;color:#b8b8b8;font-size:10px;letter-spacing:-0.3px">05:15f</div><div class="t" style="left:624.4px;top:4px;color:#b8b8b8;font-size:10px;letter-spacing:-0.3px">06:00f</div><div class="t" style="left:677.1px;top:4px;color:#b8b8b8;font-size:10px;letter-spacing:-0.3px">06:15f</div><div class="t" style="left:729.8px;top:4px;color:#b8b8b8;font-size:10px;letter-spacing:-0.3px">07:00f</div><div class="t" style="left:782.5px;top:4px;color:#b8b8b8;font-size:10px;letter-spacing:-0.3px">07:15f</div><div class="t" style="left:835.2px;top:4px;color:#b8b8b8;font-size:10px;letter-spacing:-0.3px">08:00f</div><div class="t" style="left:887.9px;top:4px;color:#b8b8b8;font-size:10px;letter-spacing:-0.3px">08:15f</div><div class="t" style="left:940.6px;top:4px;color:#b8b8b8;font-size:10px;letter-spacing:-0.3px">09:00f</div><div class="t" style="left:993.3px;top:4px;color:#b8b8b8;font-size:10px;letter-spacing:-0.3px">09:15f</div><div class="t" style="left:1046.0px;top:4px;color:#b8b8b8;font-size:10px;letter-spacing:-0.3px">10:00f</div></div>
<svg class="a" style="left:0;top:0" width="1920" height="1080">
<path d="M840.5 781V786 M892.5 783V786 M945.5 781V786 M998.5 783V786 M1050.5 781V786 M1103.5 783V786 M1156.5 781V786 M1208.5 783V786 M1261.5 781V786 M1314.5 783V786 M1367.5 781V786 M1419.5 783V786 M1472.5 781V786 M1525.5 783V786 M1577.5 781V786 M1630.5 783V786 M1683.5 781V786 M1735.5 783V786 M1788.5 781V786 M1841.5 783V786 M1894.5 781V786" stroke="#a0a0a0" stroke-width="1"/>
<!-- header icons -->
<path d="M7 798C9.5 794 16.5 794 19 798C16.5 802 9.5 802 7 798Z" fill="#a8a8a8"/><circle cx="13" cy="798" r="2.3" fill="#2a2a2a"/>
<path d="M22 796H25L29 792.5V803.5L25 800H22Z" fill="#a8a8a8"/><path d="M30.5 795.5Q32.5 798 30.5 800.5M32 794Q35 798 32 802" fill="none" stroke="#a8a8a8" stroke-width="0.9"/>
<circle cx="42.5" cy="798" r="3.2" fill="#a8a8a8"/>
<path d="M55 796V794.5A2.5 2.5 0 0 1 60 794.5V796" fill="none" stroke="#a8a8a8" stroke-width="1.4"/><rect x="53.5" y="796" width="8" height="6" fill="#a8a8a8"/>
<path d="M69.5 791V804M101.5 791V804M134.5 791V804M562.5 791V804M699.5 791V804M816.5 791V804" stroke="#3c3c3c"/>
<path d="M86 799L92 793H97V798L91 804Z" fill="#b0b0b0"/><circle cx="94.5" cy="795.5" r="1.1" fill="#333"/>
<g fill="#a8a8a8">
<path d="M568 799A5 5 0 0 1 578 799Z M572.5 799H573.5V803H572.5Z M567 800H579V801H567Z"/>
<circle cx="588" cy="797.5" r="2.5"/>
</g>
<path d="M584 793.5L592 801.5M584 801.5L592 793.5M588 792V803M582.5 797.5H593.5" stroke="#a8a8a8" stroke-width="0.8"/>
<path d="M597 792L608 803" stroke="#a8a8a8" stroke-width="1.2" stroke-dasharray="1.5 1"/>
<text x="611" y="803" font-family="Liberation Serif" font-style="italic" font-size="14" fill="#a8a8a8">fx</text>
<rect x="627.5" y="792.5" width="11" height="11" fill="none" stroke="#a8a8a8"/><path d="M630.5 792.5V803.5M635.5 792.5V803.5M630.5 796H635.5M630.5 800H635.5" stroke="#a8a8a8" stroke-width="0.8"/>
<circle cx="650" cy="799" r="3.5" fill="#888"/><circle cx="652" cy="797" r="3.5" fill="#999"/><circle cx="654" cy="795" r="3.5" fill="#a8a8a8"/>
<circle cx="663.5" cy="798" r="5" fill="#e8e8e8"/><path d="M667 794.5A5 5 0 0 1 660 801.5Z" fill="#111"/>
<path d="M674 795L679.5 792L685 795V801L679.5 804L674 801Z M674 795L679.5 798L685 795M679.5 798V804" fill="none" stroke="#a8a8a8" stroke-width="1"/>
<!-- layer row icons -->
<rect x="6" y="808" width="14" height="14" fill="#111"/>
<path d="M7 815C9.5 811 16.5 811 19 815C16.5 819 9.5 819 7 815Z" fill="#b8b8b8"/><circle cx="13" cy="815" r="2.3" fill="#111"/>
<rect x="36" y="808" width="13" height="14" fill="#1c1c1c"/><rect x="51" y="808" width="13" height="14" fill="#1c1c1c"/>
<path d="M74 811H83L78.5 817Z" fill="#d8d8d8"/>
<rect x="87" y="808" width="12" height="14" fill="#6b78e8"/>
<path d="M144.5 810.5L145.8 813.8H149.2L146.5 815.8L147.5 819.2L144.5 817.2L141.5 819.2L142.5 815.8L139.8 813.8H143.2Z" fill="#e0e0e0"/>
<rect x="567" y="808" width="13" height="14" fill="#161616"/><rect x="582" y="808" width="13" height="14" fill="#161616"/><rect x="597" y="808" width="13" height="14" fill="#161616"/>
<path d="M568.5 816A4.5 4.5 0 0 1 578.5 816Z M573 816H574V820H573Z M568 817H579V818H568Z" fill="#c8c8c8"/>
<circle cx="588.5" cy="815" r="2.5" fill="none" stroke="#888" stroke-width="0.8"/><path d="M584.5 811L592.5 819M584.5 819L592.5 811M588.5 810V820M583.5 815H593.5" stroke="#888" stroke-width="0.6"/>
<path d="M599 821L608.5 810" stroke="#c8c8c8" stroke-width="1.2"/>
<rect x="642" y="808" width="13" height="14" fill="#1a1a1a"/><rect x="657" y="808" width="13" height="14" fill="#1a1a1a"/><rect x="672" y="808" width="13" height="14" fill="#1a1a1a"/>
<path d="M710.5 815.5A1.5 1.5 0 1 1 712 814A3 3 0 1 1 709 811.5A4.5 4.5 0 1 1 705.5 815.5" fill="none" stroke="#c8c8c8" stroke-width="1.3"/>
<path d="M798.5 812H808.5L803.5 817.5Z" fill="#e8e8e8"/>
<path d="M91 827H100L95.5 834Z" fill="#d0d0d0"/>
<circle cx="688.5" cy="831.5" r="5.5" fill="#d0d0d0"/><path d="M686.5 828.5L691.5 831.5L686.5 834.5Z" fill="#333"/>
<path d="M91 1049V1057L99 1053Z" fill="#d0d0d0"/>
<ellipse cx="13.5" cy="849.5" rx="6.4" ry="4.4" fill="#a4a4a4"/><circle cx="13.8" cy="849.3" r="2.9" fill="#232323"/><circle cx="14.8" cy="848.3" r="1" fill="#8a8a8a"/><path d="M109 844.5V852.5L117 848.5Z" fill="#d0d0d0"/><path d="M681 846H690L685.5 851Z" fill="#e0e0e0"/><ellipse cx="13.5" cy="866.5" rx="6.4" ry="4.4" fill="#a4a4a4"/><circle cx="13.8" cy="866.3" r="2.9" fill="#232323"/><circle cx="14.8" cy="865.3" r="1" fill="#8a8a8a"/><path d="M109 861.5V869.5L117 865.5Z" fill="#d0d0d0"/><path d="M681 863H690L685.5 868Z" fill="#e0e0e0"/><ellipse cx="13.5" cy="883.5" rx="6.4" ry="4.4" fill="#a4a4a4"/><circle cx="13.8" cy="883.3" r="2.9" fill="#232323"/><circle cx="14.8" cy="882.3" r="1" fill="#8a8a8a"/><path d="M109 878.5V886.5L117 882.5Z" fill="#d0d0d0"/><path d="M681 880H690L685.5 885Z" fill="#e0e0e0"/><ellipse cx="13.5" cy="900.5" rx="6.4" ry="4.4" fill="#a4a4a4"/><circle cx="13.8" cy="900.3" r="2.9" fill="#232323"/><circle cx="14.8" cy="899.3" r="1" fill="#8a8a8a"/><path d="M109 895.5V903.5L117 899.5Z" fill="#d0d0d0"/><path d="M681 897H690L685.5 902Z" fill="#e0e0e0"/><ellipse cx="13.5" cy="917.5" rx="6.4" ry="4.4" fill="#a4a4a4"/><circle cx="13.8" cy="917.3" r="2.9" fill="#232323"/><circle cx="14.8" cy="916.3" r="1" fill="#8a8a8a"/><path d="M109 912.5V920.5L117 916.5Z" fill="#d0d0d0"/><path d="M681 914H690L685.5 919Z" fill="#e0e0e0"/><ellipse cx="13.5" cy="934.5" rx="6.4" ry="4.4" fill="#a4a4a4"/><circle cx="13.8" cy="934.3" r="2.9" fill="#232323"/><circle cx="14.8" cy="933.3" r="1" fill="#8a8a8a"/><path d="M109 929.5V937.5L117 933.5Z" fill="#d0d0d0"/><path d="M681 931H690L685.5 936Z" fill="#e0e0e0"/><ellipse cx="13.5" cy="951.5" rx="6.4" ry="4.4" fill="#a4a4a4"/><circle cx="13.8" cy="951.3" r="2.9" fill="#232323"/><circle cx="14.8" cy="950.3" r="1" fill="#8a8a8a"/><path d="M109 946.5V954.5L117 950.5Z" fill="#d0d0d0"/><path d="M681 948H690L685.5 953Z" fill="#e0e0e0"/><ellipse cx="13.5" cy="968.5" rx="6.4" ry="4.4" fill="#a4a4a4"/><circle cx="13.8" cy="968.3" r="2.9" fill="#232323"/><circle cx="14.8" cy="967.3" r="1" fill="#8a8a8a"/><path d="M109 963.5V971.5L117 967.5Z" fill="#d0d0d0"/><path d="M681 965H690L685.5 970Z" fill="#e0e0e0"/><ellipse cx="13.5" cy="985.5" rx="6.4" ry="4.4" fill="#a4a4a4"/><circle cx="13.8" cy="985.3" r="2.9" fill="#232323"/><circle cx="14.8" cy="984.3" r="1" fill="#8a8a8a"/><path d="M109 980.5V988.5L117 984.5Z" fill="#d0d0d0"/><path d="M681 982H690L685.5 987Z" fill="#e0e0e0"/><ellipse cx="13.5" cy="1002.5" rx="6.4" ry="4.4" fill="#a4a4a4"/><circle cx="13.8" cy="1002.3" r="2.9" fill="#232323"/><circle cx="14.8" cy="1001.3" r="1" fill="#8a8a8a"/><path d="M109 997.5V1005.5L117 1001.5Z" fill="#d0d0d0"/><path d="M681 999H690L685.5 1004Z" fill="#e0e0e0"/><ellipse cx="13.5" cy="1019.5" rx="6.4" ry="4.4" fill="#a4a4a4"/><circle cx="13.8" cy="1019.3" r="2.9" fill="#232323"/><circle cx="14.8" cy="1018.3" r="1" fill="#8a8a8a"/><path d="M109 1014.5V1022.5L117 1018.5Z" fill="#d0d0d0"/><path d="M681 1016H690L685.5 1021Z" fill="#e0e0e0"/><ellipse cx="13.5" cy="1036.5" rx="6.4" ry="4.4" fill="#a4a4a4"/><circle cx="13.8" cy="1036.3" r="2.9" fill="#232323"/><circle cx="14.8" cy="1035.3" r="1" fill="#8a8a8a"/><path d="M109 1031.5V1039.5L117 1035.5Z" fill="#d0d0d0"/><path d="M681 1033H690L685.5 1038Z" fill="#e0e0e0"/>
<!-- timecode-area icons -->
<g fill="#b4b4b4">
<path d="M620 765.5H627V767.5H620Z M627 764H632V769H627Z M629 769H630.5V776H629Z M629 771H632V772.5H629Z M629 775H632V776.5H629Z M632 769.5H636V773H632Z M632 773.5H636V777H632Z"/>
<path d="M633 779H637L635 781Z"/>
</g>
<path d="M657 760V768M653 764H661M654.2 761.2L659.8 766.8M659.8 761.2L654.2 766.8" stroke="#c8c8c8" stroke-width="1.1"/>
<path d="M660 770L665.5 767L671 770V776.5L665.5 779.5L660 776.5Z" fill="#8a8a8a" stroke="#c0c0c0" stroke-width="1"/>
<path d="M660 770L665.5 773L671 770M665.5 773V779.5" fill="none" stroke="#c0c0c0" stroke-width="0.9"/>
<path d="M689 773.5H704V777.5H689Z" fill="#9a9a9a"/>
<path d="M690 770A6.5 6 0 0 1 703 770Z" fill="#c8c8c8"/><path d="M695.5 770H697.5V775H695.5Z" fill="#c8c8c8"/>
<rect x="718.5" y="762.5" width="10" height="13" fill="#7a7a7a" stroke="#b8b8b8"/>
<path d="M720 762.5V775.5M727 762.5V775.5" stroke="#b8b8b8" stroke-width="2" stroke-dasharray="1 1"/>
<rect x="715.5" y="765.5" width="3" height="12" fill="none" stroke="#9a9a9a" stroke-dasharray="1 1"/>
<circle cx="745.5" cy="772.5" r="4.5" fill="#6a6a6a" stroke="#8a8a8a"/><circle cx="748" cy="770" r="4.5" fill="#7a7a7a" stroke="#9a9a9a"/><circle cx="750.5" cy="767.5" r="4.5" fill="#8a8a8a" stroke="#b8b8b8"/>
<g fill="#b4b4b4"><rect x="775" y="762" width="4" height="4"/><rect x="780" y="762" width="4" height="4"/><rect x="775" y="767" width="4" height="4"/><rect x="775" y="772" width="4" height="4"/><rect x="780" y="772" width="2" height="4"/><circle cx="786" cy="769" r="4.5"/><rect x="784" y="773" width="4" height="5"/></g>
<rect x="801.5" y="763.5" width="13" height="12" fill="#6a6a6a" stroke="#c0c0c0"/><path d="M802 767C806 767 808 773 814 773" fill="none" stroke="#c8c8c8" stroke-width="1.1"/>
<path d="M804 762V763M808 762V763M812 762V763M800 768H801M800 772H801M815 768H816M815 772H816" stroke="#c0c0c0"/>
<circle cx="119" cy="767" r="4.5" fill="none" stroke="#d0d0d0" stroke-width="1.3"/><path d="M116 770.5L112 774.5" stroke="#d0d0d0" stroke-width="1.4"/><path d="M124 772H129L126.5 775Z" fill="#d0d0d0"/>
<!-- CTI -->
<path d="M840.5 758V766M840.5 785V1080" stroke="#c42222" stroke-width="1"/>
<path d="M837 827.5H844M837 837.5H844M839.5 827.5V837.5M841.5 827.5V837.5" fill="none" stroke="#f2dada" stroke-width="1"/><path d="M837 844.5H844M837 854.5H844M839.5 844.5V854.5M841.5 844.5V854.5" fill="none" stroke="#f2dada" stroke-width="1"/><path d="M837 861.5H844M837 871.5H844M839.5 861.5V871.5M841.5 861.5V871.5" fill="none" stroke="#f2dada" stroke-width="1"/><path d="M837 878.5H844M837 888.5H844M839.5 878.5V888.5M841.5 878.5V888.5" fill="none" stroke="#f2dada" stroke-width="1"/><path d="M837 895.5H844M837 905.5H844M839.5 895.5V905.5M841.5 895.5V905.5" fill="none" stroke="#f2dada" stroke-width="1"/><path d="M837 912.5H844M837 922.5H844M839.5 912.5V922.5M841.5 912.5V922.5" fill="none" stroke="#f2dada" stroke-width="1"/><path d="M837 929.5H844M837 939.5H844M839.5 929.5V939.5M841.5 929.5V939.5" fill="none" stroke="#f2dada" stroke-width="1"/><path d="M837 946.5H844M837 956.5H844M839.5 946.5V956.5M841.5 946.5V956.5" fill="none" stroke="#f2dada" stroke-width="1"/><path d="M837 963.5H844M837 973.5H844M839.5 963.5V973.5M841.5 963.5V973.5" fill="none" stroke="#f2dada" stroke-width="1"/><path d="M837 980.5H844M837 990.5H844M839.5 980.5V990.5M841.5 980.5V990.5" fill="none" stroke="#f2dada" stroke-width="1"/><path d="M837 997.5H844M837 1007.5H844M839.5 997.5V1007.5M841.5 997.5V1007.5" fill="none" stroke="#f2dada" stroke-width="1"/><path d="M837 1014.5H844M837 1024.5H844M839.5 1014.5V1024.5M841.5 1014.5V1024.5" fill="none" stroke="#f2dada" stroke-width="1"/><path d="M837 1031.5H844M837 1041.5H844M839.5 1031.5V1041.5M841.5 1031.5V1041.5" fill="none" stroke="#f2dada" stroke-width="1"/><path d="M837 1048.5H844M837 1058.5H844M839.5 1048.5V1058.5M841.5 1048.5V1058.5" fill="none" stroke="#f2dada" stroke-width="1"/>
<path d="M840.5 823V1080" stroke="#c42222" stroke-width="1.2"/>
<path d="M834 771.5H847V778.5L840.5 785L834 778.5Z" fill="#5ac4ee" stroke="#0a2233" stroke-width="1"/><path d="M838 774V776M840.5 774V776M843 774V776M838.5 778.5H842.5M840.5 778.5V782" stroke="#0a3a5a" stroke-width="0.9"/>
<path d="M840 758.5H838A4.5 4 0 0 0 833.5 762.5A4.5 4 0 0 0 838 766H840Z" fill="#5ac4ee" stroke="#0a2233" stroke-width="1"/><path d="M836.5 760.5V764M838.5 760.5V764" stroke="#0a3a5a" stroke-width="0.8"/>
<rect x="834" y="787.5" width="5.5" height="14.5" rx="2.2" fill="#5ac4ee" stroke="#0a2233" stroke-width="1"/><path d="M836 790V800M837.6 790V800" stroke="#0a3a5a" stroke-width="0.7"/>
<rect x="1895" y="787.5" width="5.5" height="14.5" rx="2.2" fill="#5ac4ee" stroke="#0a2233" stroke-width="1"/><path d="M1897 790V800M1898.6 790V800" stroke="#0a3a5a" stroke-width="0.7"/>
<path d="M1894.5 758.5H1897A4.5 4 0 0 1 1901.5 762.5A4.5 4 0 0 1 1897 766H1894.5Z" fill="#5ac4ee" stroke="#0a2233" stroke-width="1"/><path d="M1896.5 760.5V764M1898.5 760.5V764" stroke="#0a3a5a" stroke-width="0.8"/>
<path d="M1905 789H1916V798L1910.5 803L1905 798Z" fill="#6a6a6a" stroke="#c8c8c8" stroke-width="1"/>
<circle cx="1906.5" cy="815" r="4" fill="none" stroke="#c8c8c8" stroke-width="1.2"/><rect x="1908.5" y="813.5" width="6" height="6" fill="#262626" stroke="#c8c8c8"/>
</svg>

<div class="a" style="left:0;top:26px;width:1px;height:1054px;background:#000"></div>
</body></html>
